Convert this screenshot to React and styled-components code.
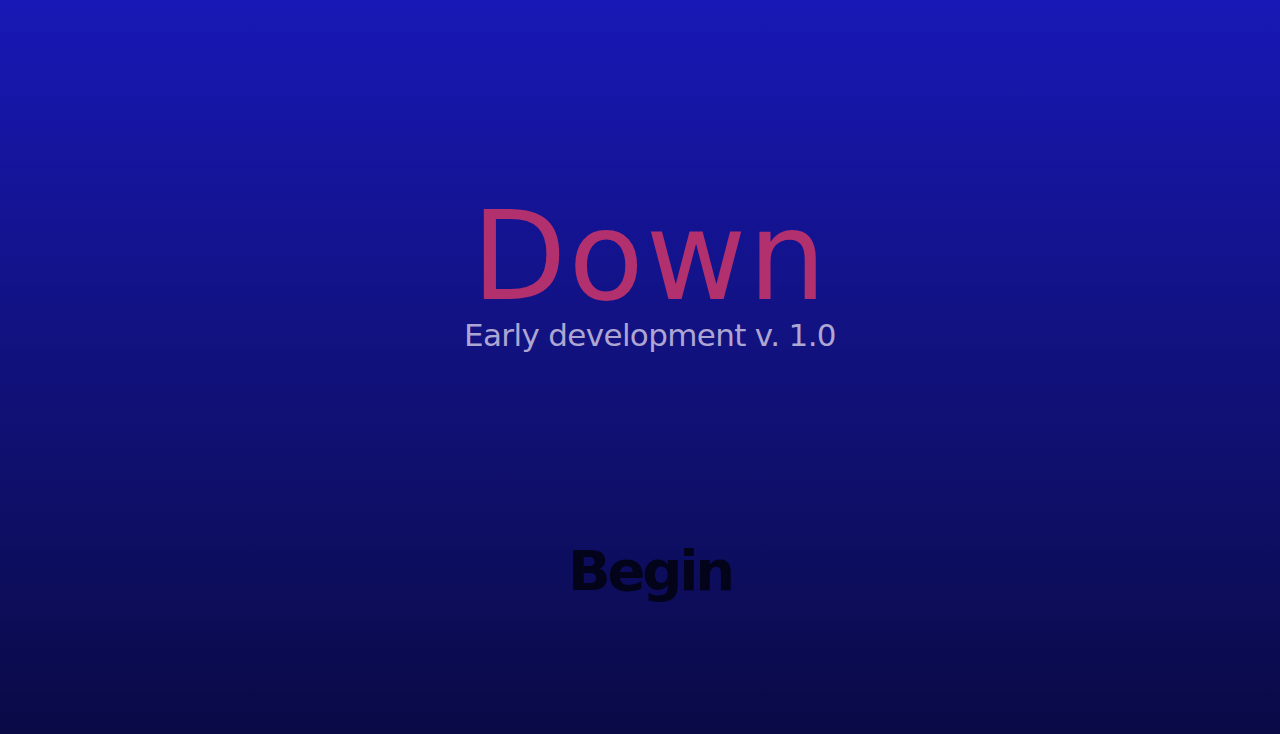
import React from "react";
import styled, { createGlobalStyle } from "styled-components";

const Global = createGlobalStyle`
  html, body { margin: 0; padding: 0; height: 100%; }
  #root { height: 100%; }
`;

const Screen = styled.div`
  box-sizing: border-box;
  width: 100%;
  height: 734px;
  padding-left: 20px;
  background: linear-gradient(180deg, #1818b6 0%, #11117c 50%, #0a0a46 100%);
  display: flex;
  flex-direction: column;
  align-items: center;
  font-family: "DejaVu Sans", sans-serif;
  overflow: hidden;
`;

const TitleBlock = styled.div`
  display: flex;
  flex-direction: column;
  align-items: center;
  margin-top: 198px;
`;

const Title = styled.h1`
  margin: 0;
  font-weight: 400;
  font-size: 123px;
  line-height: 118px;
  color: #b3306f;
  letter-spacing: 2px;
`;

const Subtitle = styled.div`
  font-size: 31px;
  line-height: 36px;
  color: #aea6d2;
  margin-top: 1px;
  letter-spacing: -0.65px;
`;

const BeginButton = styled.button`
  margin-top: 186px;
  background: none;
  border: none;
  padding: 0;
  font-family: inherit;
  font-weight: 700;
  font-size: 56px;
  line-height: 64px;
  letter-spacing: -3.2px;
  color: #03031a;
  cursor: pointer;
`;

export default function App() {
  return (
    <>
      <Global />
      <Screen>
        <TitleBlock>
          <Title>Down</Title>
          <Subtitle>Early development v. 1.0</Subtitle>
        </TitleBlock>
        <BeginButton>Begin</BeginButton>
      </Screen>
    </>
  );
}
